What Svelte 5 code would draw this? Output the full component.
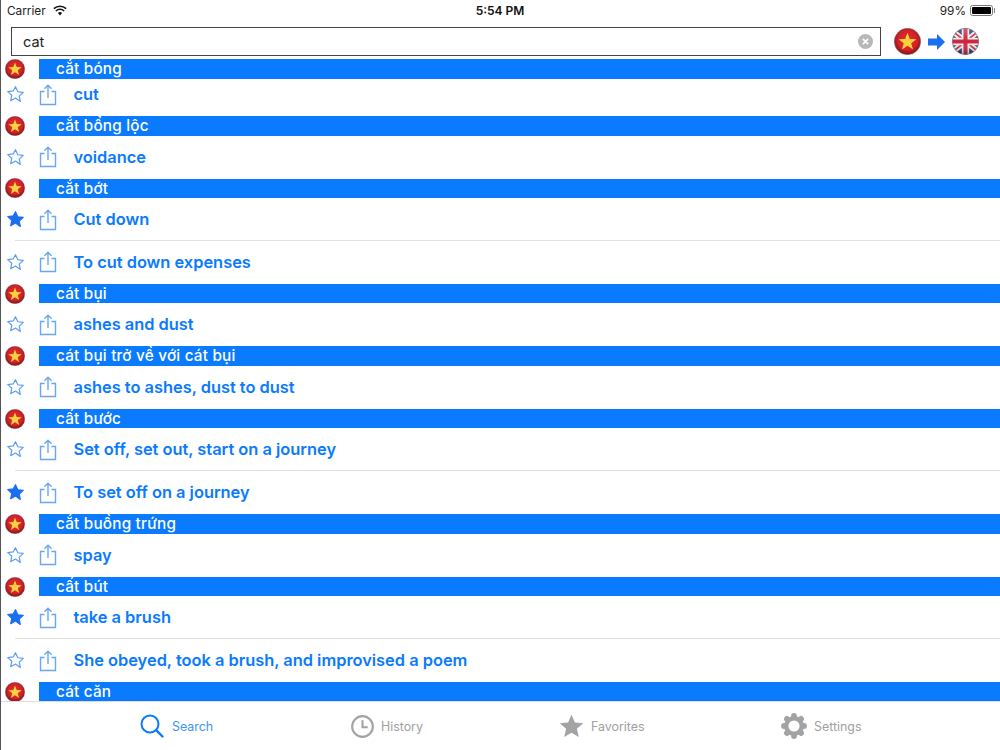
<script>
	const entries = [
		{ word: 'cắt bóng', clip: true, rows: [{ text: 'cut' }] },
		{ word: 'cắt bổng lộc', rows: [{ text: 'voidance' }] },
		{ word: 'cắt bớt', rows: [{ text: 'Cut down', fav: true }, { text: 'To cut down expenses' }] },
		{ word: 'cát bụi', rows: [{ text: 'ashes and dust' }] },
		{ word: 'cát bụi trở về với cát bụi', rows: [{ text: 'ashes to ashes, dust to dust' }] },
		{ word: 'cất bước', rows: [{ text: 'Set off, set out, start on a journey' }, { text: 'To set off on a journey', fav: true }] },
		{ word: 'cắt buồng trứng', rows: [{ text: 'spay' }] },
		{ word: 'cất bút', rows: [{ text: 'take a brush', fav: true }, { text: 'She obeyed, took a brush, and improvised a poem' }] },
		{ word: 'cát căn', rows: [] }
	];

	const starPath = 'M12 2.2l2.9 6.3 6.9.8-5.1 4.7 1.4 6.8L12 16.4l-6.1 3.4 1.4-6.8-5.1-4.7 6.9-.8z';
	const gearLobes = [0, 45, 90, 135, 180, 225, 270, 315];
</script>

{#snippet vnFlag(size)}
	<svg class="flag" width={size} height={size} viewBox="0 0 40 40">
		<defs>
			<radialGradient id="vn-red" cx="50%" cy="45%" r="55%">
				<stop offset="0%" stop-color="#e2322f" />
				<stop offset="68%" stop-color="#d0222a" />
				<stop offset="92%" stop-color="#991419" />
				<stop offset="100%" stop-color="#701015" />
			</radialGradient>
		</defs>
		<circle cx="20" cy="20" r="19.5" fill="url(#vn-red)" stroke="#7a6a6a" stroke-width="0.8" />
		<path d="M20 7l3.4 9.200 9.800.3-7.700 6 2.700 9.400-8.200-5.500-8.200 5.500 2.700-9.400-7.700-6 9.800-.3z" fill="#fad03c" />
	</svg>
{/snippet}

<div class="screen">
	<header class="status">
		<div class="status-left">
			<span>Carrier</span>
			<svg width="14" height="11" viewBox="0 0 14 11">
				<path d="M7 10.400L4.900 8.100a3 3 0 0 1 4.200 0z" fill="#111" />
				<path d="M2.900 6a5.800 5.800 0 0 1 8.200 0M.9 3.700a8.800 8.800 0 0 1 12.200 0" fill="none" stroke="#111" stroke-width="1.600" />
			</svg>
		</div>
		<div class="status-time">5:54 PM</div>
		<div class="status-right">
			<span>99%</span>
			<span class="battery"><span class="battery-level"></span></span>
		</div>
	</header>

	<div class="search-row">
		<div class="search-box">
			<span class="search-text">cat</span>
			<svg class="clear" width="15" height="15" viewBox="0 0 14 14">
				<circle cx="7" cy="7" r="7" fill="#b8b8b8" />
				<path d="M4.500 4.500l5 5M9.500 4.500l-5 5" stroke="#fff" stroke-width="1.600" />
			</svg>
		</div>
		<div class="lang-switch">
			{@render vnFlag(27)}
			<svg width="17" height="16" viewBox="0 0 17 16">
				<path d="M0 4.500h9V0l8 8-8 8v-4.500H0z" fill="#1a6ff0" />
			</svg>
			<svg class="flag" width="27" height="27" viewBox="0 0 40 40">
				<defs>
					<clipPath id="uk-clip"><circle cx="20" cy="20" r="19.500" /></clipPath>
					<linearGradient id="uk-shade" x1="0" y1="0" x2="0" y2="1">
						<stop offset="0%" stop-color="#fff" stop-opacity="0.25" />
						<stop offset="50%" stop-color="#fff" stop-opacity="0" />
						<stop offset="100%" stop-color="#000" stop-opacity="0.3" />
					</linearGradient>
				</defs>
				<g clip-path="url(#uk-clip)">
					<rect width="40" height="40" fill="#26387a" />
					<path d="M0 4L40 36M40 4L0 36" stroke="#eee" stroke-width="8" />
					<path d="M0 4L40 36M40 4L0 36" stroke="#d0243c" stroke-width="2.600" />
					<path d="M20 0V40M0 20H40" stroke="#eee" stroke-width="11" />
					<path d="M20 0V40M0 20H40" stroke="#d0243c" stroke-width="6" />
					<rect width="40" height="40" fill="url(#uk-shade)" />
				</g>
				<circle cx="20" cy="20" r="19.500" fill="none" stroke="#777" stroke-width="0.800" />
			</svg>
		</div>
	</div>

	<div class="list">
		{#each entries as entry}
			<div class="head">
				<div class="head-flag">{@render vnFlag(20)}</div>
				<div class="head-bar">{entry.word}</div>
			</div>
			{#each entry.rows as row, i}
				<div class="row" class:clip={entry.clip} class:divided={i < entry.rows.length - 1}>
					<svg class="star" width="19" height="19" viewBox="0 0 24 24">
						<path d={starPath} fill={row.fav ? '#1a6ff0' : 'none'} stroke={row.fav ? '#1a6ff0' : '#5c9df2'} stroke-width="1.500" stroke-linejoin="round" />
					</svg>
					<svg class="share" width="18" height="22" viewBox="0 0 18 22">
						<path d="M5.500 7.500H1.500v13h15v-13h-4M9 14V1.500M5.500 4.800L9 1.300l3.500 3.500" fill="none" stroke="#6aa5f2" stroke-width="1.400" />
					</svg>
					<span class="row-text">{row.text}</span>
				</div>
			{/each}
		{/each}
	</div>

	<nav class="tabs">
		<div class="tab active" style="--x: 140px">
			<svg width="24" height="24" viewBox="0 0 24 24">
				<circle cx="10" cy="10" r="8.500" fill="none" stroke="#0a7aff" stroke-width="2" />
				<path d="M16.200 16.200l6.300 6.300" stroke="#0a7aff" stroke-width="2.400" stroke-linecap="round" />
			</svg>
			<span>Search</span>
		</div>
		<div class="tab" style="--x: 351px">
			<svg width="23" height="23" viewBox="0 0 24 24">
				<circle cx="12" cy="12" r="10.800" fill="none" stroke="#a3a3a3" stroke-width="2.200" />
				<path d="M12 5.500V12.800H17.500" fill="none" stroke="#a3a3a3" stroke-width="2.200" />
			</svg>
			<span>History</span>
		</div>
		<div class="tab" style="--x: 559px">
			<svg width="25" height="24" viewBox="0 0 24 24">
				<path d="M12 .8l3.400 7.700 8.300.8-6.300 5.500 1.900 8.200L12 18.700 4.700 23l1.900-8.200L.3 9.300l8.300-.8z" fill="#a3a3a3" />
			</svg>
			<span>Favorites</span>
		</div>
		<div class="tab" style="--x: 781px">
			<svg width="26" height="26" viewBox="0 0 26 26">
				<circle cx="13" cy="13" r="7.800" fill="none" stroke="#a3a3a3" stroke-width="4.400" />
				{#each gearLobes as angle}
					<circle cx="13" cy="3" r="2.900" fill="#a3a3a3" transform="rotate({angle} 13 13)" />
				{/each}
			</svg>
			<span>Settings</span>
		</div>
	</nav>
</div>

<style>
	:global(body) {
		margin: 0;
		background: #fff;
	}

	.screen {
		width: 1000px;
		height: 750px;
		box-sizing: border-box;
		border-left: 1px solid #555;
		display: flex;
		flex-direction: column;
		overflow: hidden;
		font-family: Inter, "Liberation Sans", sans-serif;
		background: #fff;
	}

	.status {
		height: 21px;
		flex: none;
		display: grid;
		grid-template-columns: 1fr auto 1fr;
		align-items: center;
		padding: 0 7px 0 6px;
		font-size: 11.800px;
		color: #222;
	}

	.status-left {
		display: flex;
		align-items: center;
		gap: 7px;
	}

	.status-time {
		font-weight: 600;
		font-size: 12px;
		color: #111;
	}

	.status-right {
		display: flex;
		justify-content: flex-end;
		align-items: center;
		gap: 4px;
	}

	.battery {
		width: 23px;
		height: 11px;
		box-sizing: border-box;
		padding: 1px;
		border: 1px solid #777;
		border-radius: 2.500px;
		position: relative;
		display: block;
	}

	.battery::after {
		content: '';
		position: absolute;
		right: -3px;
		top: 2px;
		width: 1.500px;
		height: 5px;
		background: #888;
	}

	.battery-level {
		display: block;
		height: 100%;
		background: #000;
		border-radius: 1px;
	}

	.search-row {
		height: 38px;
		flex: none;
		display: flex;
		align-items: center;
		padding: 3px 21px 0 10px;
		box-sizing: border-box;
		gap: 13px;
	}

	.search-box {
		flex: 1;
		height: 29px;
		box-sizing: border-box;
		border: 1.500px solid #444;
		display: flex;
		align-items: center;
		justify-content: space-between;
		padding: 0 7px 0 11px;
	}

	.search-text {
		font-size: 14.500px;
		color: #222;
	}

	.clear {
		display: block;
	}

	.lang-switch {
		display: flex;
		align-items: center;
		gap: 7px;
	}

	.flag {
		display: block;
	}

	.list {
		flex: 1;
		min-height: 0;
		overflow: hidden;
	}

	.head {
		height: 19.530px;
		display: flex;
		align-items: center;
	}

	.head-flag {
		width: 38px;
		flex: none;
		padding-left: 4px;
		box-sizing: border-box;
	}

	.head-bar {
		flex: 1;
		height: 100%;
		background: #0a7aff;
		color: #fff;
		font-size: 15.300px;
		font-weight: 500;
		letter-spacing: 0.2px;
		line-height: 19.530px;
		padding-left: 17px;
	}

	.row {
		height: 42.970px;
		display: flex;
		align-items: center;
		position: relative;
		box-sizing: border-box;
	}

	.row.clip {
		height: 37.500px;
		padding-bottom: 5.500px;
	}

	.row.divided::after {
		content: '';
		position: absolute;
		left: 14px;
		right: 0;
		bottom: 0;
		height: 1px;
		background: #e2e2e2;
	}

	.star {
		margin-left: 5px;
		flex: none;
	}

	.share {
		margin-left: 14px;
		flex: none;
	}

	.row-text {
		margin-left: 16.500px;
		padding-bottom: 1px;
		font-size: 16.400px;
		font-weight: 600;
		color: #0a7aff;
	}

	.tabs {
		height: 49px;
		flex: none;
		position: relative;
		background: #fff;
		border-top: 1px solid #ddd;
		box-sizing: border-box;
	}

	.tab {
		position: absolute;
		left: calc(var(--x) - 1px);
		top: 11px;
		height: 26px;
		display: flex;
		align-items: center;
		gap: 7px;
		font-size: 12.400px;
		color: #a0a0a0;
	}

	.tab.active {
		gap: 8px;
		color: #3b93fb;
	}
</style>
